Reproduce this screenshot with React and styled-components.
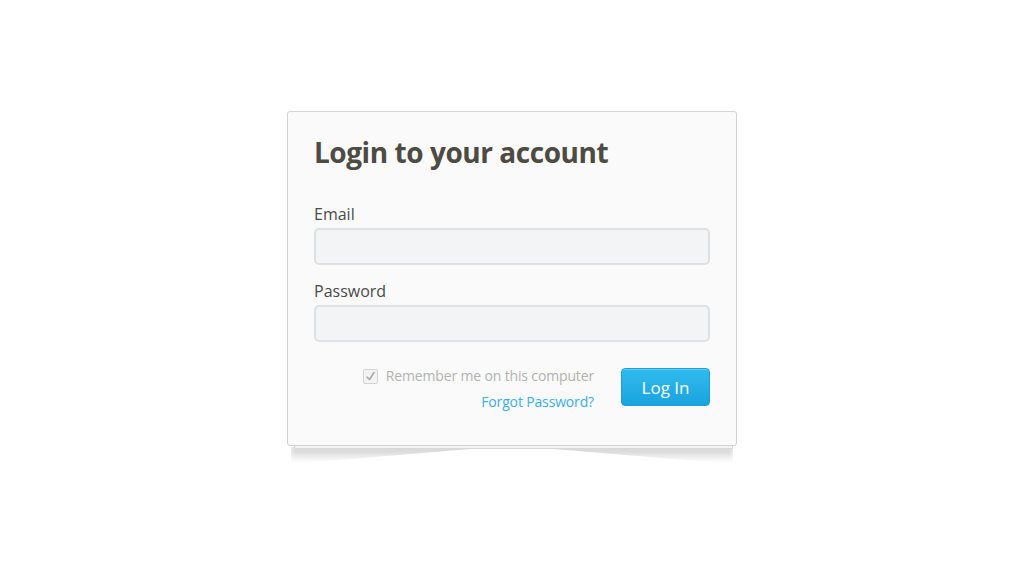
import React from 'react';
import styled, { createGlobalStyle } from 'styled-components';

const GlobalStyle = createGlobalStyle`
  html, body {
    margin: 0;
    padding: 0;
    background: #ffffff;
    font-family: 'Open Sans', 'Liberation Sans', sans-serif;
  }
`;

const Page = styled.div`
  width: 1024px;
  height: 576px;
  display: flex;
  justify-content: center;
  padding-top: 111px;
  box-sizing: border-box;
`;

// curled page shadow under the card, drawn with two tapered gradients
const Stack = styled.div`
  position: relative;
  z-index: 0;
  width: 450px;
  height: fit-content;

  &::before,
  &::after {
    content: '';
    position: absolute;
    top: calc(100% - 2px);
    width: 42%;
    height: 17px;
    z-index: -1;
    background: linear-gradient(to bottom, rgba(0, 0, 0, 0.2), rgba(0, 0, 0, 0) 90%);
    filter: blur(2px);
  }
  &::before {
    left: 4px;
    clip-path: polygon(0 0, 100% 0, 100% 8%, 0 100%);
  }
  &::after {
    right: 4px;
    clip-path: polygon(0 0, 100% 0, 100% 100%, 0 8%);
  }
`;

const Card = styled.form`
  position: relative;
  z-index: 1;
  box-sizing: border-box;
  background: #fafafa;
  border: 1px solid #d2d2d2;
  border-radius: 3px;
  padding: 23px 26px 33px 26px;
`;

const Sheet = styled.div`
  position: relative;
  z-index: 1;
  height: 2px;
  margin: 0 4px 0 7px;
  background: #f4f4f4;
  border: 1px solid #d8d8d8;
  border-top: none;
  border-radius: 0 0 2px 2px;
`;

const Title = styled.h1`
  margin: 0 0 35px;
  font-size: 28px;
  line-height: 34px;
  font-weight: 700;
  letter-spacing: -0.45px;
  color: #4d4b43;
`;

const Label = styled.label`
  display: block;
  font-size: 16px;
  line-height: 20px;
  color: #4a4a4a;
  margin-bottom: 4px;
`;

const Input = styled.input`
  display: block;
  box-sizing: border-box;
  width: 100%;
  height: 37px;
  margin: 0 0 ${p => p.$gap || 0}px;
  background: #f3f4f5;
  border: 2px solid #dfe0e1;
  border-radius: 5px;
  outline: none;
`;

const Footer = styled.div`
  display: flex;
  justify-content: flex-end;
  align-items: flex-start;
  gap: 27px;
  margin-top: 26px;
`;

const Options = styled.div`
  display: flex;
  flex-direction: column;
  align-items: flex-end;
  gap: 6px;
`;

const Remember = styled.div`
  display: flex;
  align-items: center;
  gap: 8px;
  font-size: 14px;
  letter-spacing: -0.15px;
  line-height: 20px;
  color: #b2b2b2;
  margin-top: -2px;
`;

const Check = styled.span`
  display: inline-flex;
  align-items: center;
  justify-content: center;
  width: 15px;
  height: 15px;
  box-sizing: border-box;
  border: 1px solid #d4d4d4;
  border-radius: 2px;
  background: #f3f3f3;
`;

const Forgot = styled.a`
  font-size: 14px;
  letter-spacing: -0.15px;
  line-height: 20px;
  color: #3aafe2;
  text-decoration: none;
`;

const Button = styled.button`
  width: 89px;
  height: 38px;
  box-sizing: border-box;
  border: 1px solid #1b9fd8;
  border-radius: 4px;
  background: linear-gradient(#30bbef, #1aa3de);
  color: #ffffff;
  font-family: 'Open Sans', 'Liberation Sans', sans-serif;
  font-size: 17px;
  padding: 0;
  box-shadow: inset 0 1px 0 rgba(255, 255, 255, 0.25);
`;

export default function App() {
  return (
    <>
      <GlobalStyle />
      <Page>
        <Stack>
          <Card onSubmit={e => e.preventDefault()}>
            <Title>Login to your account</Title>
            <Label>Email</Label>
            <Input type="email" $gap={16} />
            <Label>Password</Label>
            <Input type="password" />
            <Footer>
              <Options>
                <Remember>
                  <Check>
                    <svg width="11" height="11" viewBox="0 0 11 11">
                      <path d="M2 6 L4.5 8.5 L9 1.5" fill="none" stroke="#a8a8a8" strokeWidth="1.6" strokeLinecap="round" strokeLinejoin="round" />
                    </svg>
                  </Check>
                  Remember me on this computer
                </Remember>
                <Forgot href="#">Forgot Password?</Forgot>
              </Options>
              <Button type="submit">Log In</Button>
            </Footer>
          </Card>
          <Sheet />
        </Stack>
      </Page>
    </>
  );
}
